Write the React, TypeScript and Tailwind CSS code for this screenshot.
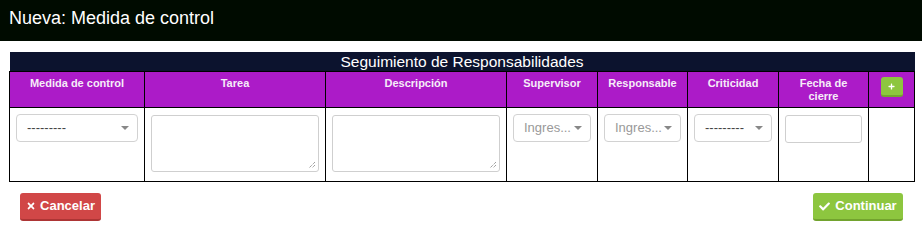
import { FaCheck, FaTimes, FaPlus } from 'react-icons/fa';

const cols = [
  { label: 'Medida de control', w: 135 },
  { label: 'Tarea', w: 181 },
  { label: 'Descripción', w: 181 },
  { label: 'Supervisor', w: 91 },
  { label: 'Responsable', w: 90 },
  { label: 'Criticidad', w: 91 },
  { label: 'Fecha de cierre', w: 90 },
];

function Caret() {
  return <span className="w-0 h-0 border-x-[4px] border-x-transparent border-t-[4px] border-t-[#888]" />;
}

function SelectBox({ text, placeholder }: { text: string; placeholder?: boolean }) {
  return (
    <div className="h-[28px] w-full flex items-center justify-between rounded-[4px] border border-[#d2d2d2] bg-white pl-[10px] pr-[8px]">
      <span className={`text-[13px] truncate ${placeholder ? 'text-[#999]' : 'text-[#444]'}`}>{text}</span>
      <Caret />
    </div>
  );
}

function Area() {
  return (
    <div className="relative h-[57px] w-full rounded-[3px] border border-[#cfcfcf] bg-white">
      <svg className="absolute right-[2px] bottom-[2px]" width="8" height="8" viewBox="0 0 8 8">
        <path d="M7 1L1 7M7 4L4 7" stroke="#777" strokeWidth="1" strokeDasharray="1 1" />
      </svg>
    </div>
  );
}

export default function App() {
  return (
    <div className="w-[922px] h-[241px] bg-white font-['Liberation_Sans',Arial,sans-serif]">
      <div className="h-[41px] bg-[#000b00] flex items-center px-[9px]">
        <h1 className="text-[18px] text-white leading-none -mt-[5px]">Nueva: Medida de control</h1>
      </div>

      <div className="px-[9px] pt-[11px]">
        <table className="w-[905px] border-collapse table-fixed">
          <colgroup>
            {cols.map(c => <col key={c.label} style={{ width: c.w }} />)}
            <col style={{ width: 46 }} />
          </colgroup>
          <thead>
            <tr>
              <th colSpan={8} className="h-[19px] bg-[#0c132e] text-[15.5px] font-normal text-white leading-[19px] text-center p-0">
                Seguimiento de Responsabilidades
              </th>
            </tr>
            <tr>
              {cols.map(c => (
                <th
                  key={c.label}
                  className="h-[36px] align-top bg-[#ac1bc8] border border-black px-[8px] pt-[5px] text-[11px] leading-[12.5px] font-bold text-[#f6ecf8]"
                >
                  {c.label}
                </th>
              ))}
              <th className="align-top bg-[#ac1bc8] border border-black pt-[5px]">
                <div className="mx-auto w-[22px] h-[20px] rounded-[3px] bg-[#8dc63f] border-b-2 border-b-[#74a52f] flex items-center justify-center">
                  <FaPlus className="text-white w-[7px] h-[7px]" />
                </div>
              </th>
            </tr>
          </thead>
          <tbody>
            <tr className="h-[74px]">
              <td className="align-top border border-black px-[6px] pt-[6px]"><SelectBox text="---------" /></td>
              <td className="align-top border border-black px-[6px] pt-[7px]"><Area /></td>
              <td className="align-top border border-black px-[6px] pt-[7px]"><Area /></td>
              <td className="align-top border border-black px-[6px] pt-[6px]"><SelectBox text="Ingres..." placeholder /></td>
              <td className="align-top border border-black px-[6px] pt-[6px]"><SelectBox text="Ingres..." placeholder /></td>
              <td className="align-top border border-black px-[6px] pt-[6px]"><SelectBox text="---------" /></td>
              <td className="align-top border border-black px-[6px] pt-[7px]">
                <div className="h-[28px] w-full rounded-[3px] border border-[#cfcfcf] bg-white" />
              </td>
              <td className="border border-black" />
            </tr>
          </tbody>
        </table>

        <div className="flex justify-between pt-[11px] px-[11px] pr-[10px]">
          <button className="h-[28px] w-[81px] rounded-[3px] bg-[#d14747] border-b-2 border-b-[#ad3535] flex items-center justify-center gap-[4px] text-white text-[13px] font-bold">
            <FaTimes className="w-[10px] h-[10px]" />
            Cancelar
          </button>
          <button className="h-[28px] w-[90px] rounded-[3px] bg-[#8dc63f] border-b-2 border-b-[#72a32e] flex items-center justify-center gap-[5px] text-white text-[13px] font-bold">
            <FaCheck className="w-[11px] h-[11px]" />
            Continuar
          </button>
        </div>
      </div>
    </div>
  );
}
